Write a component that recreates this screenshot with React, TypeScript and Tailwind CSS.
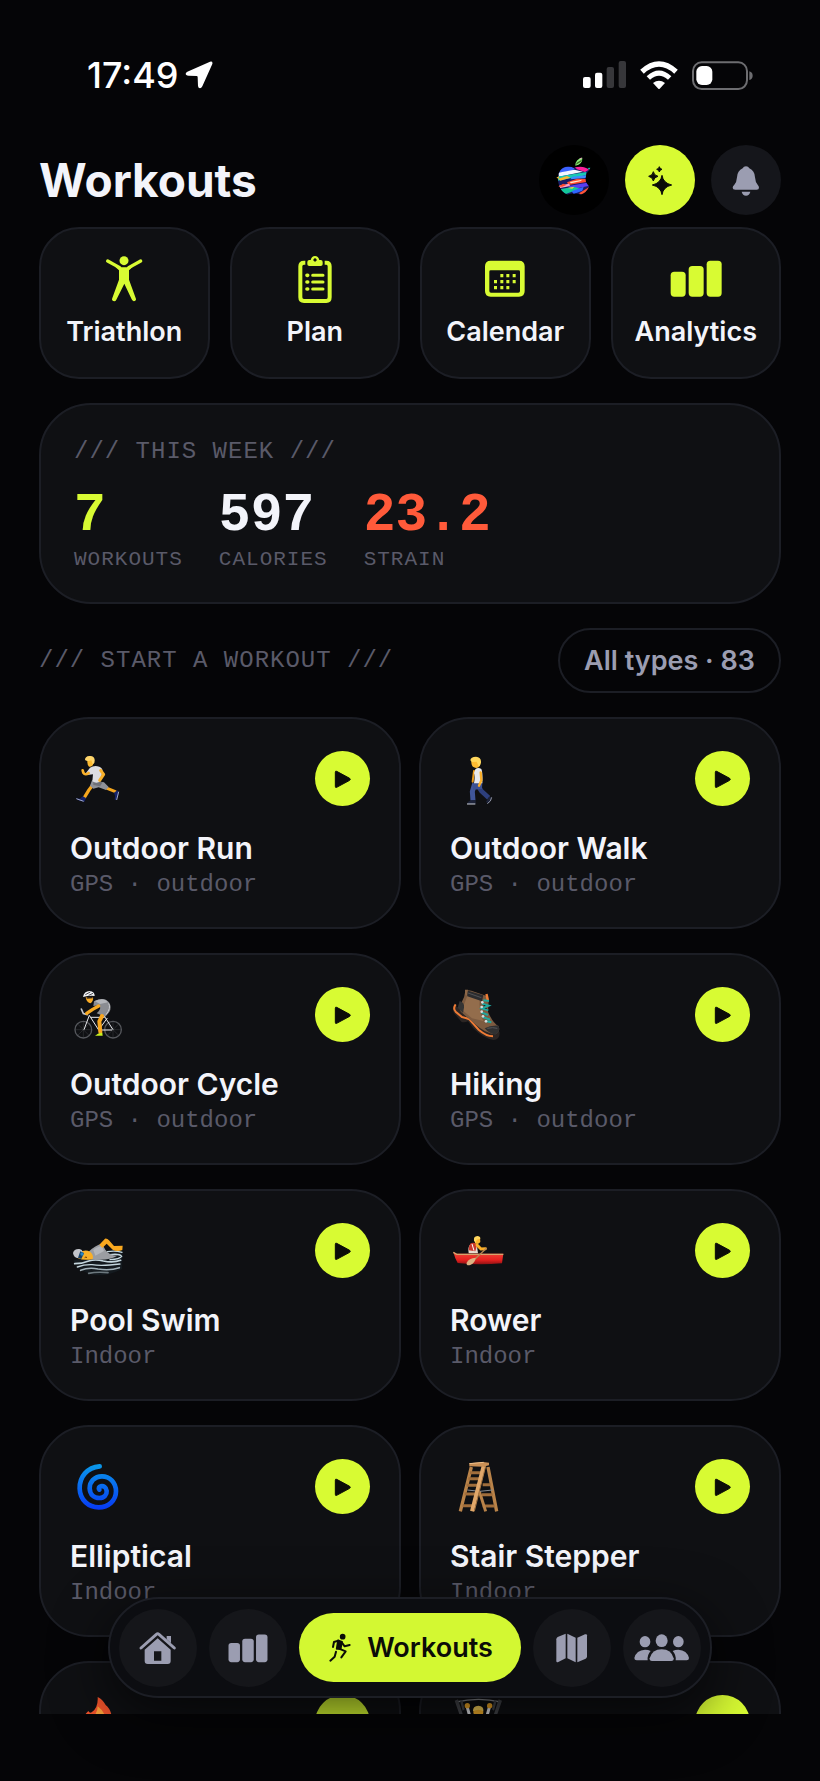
import type { ReactNode } from "react";

const LIME = "#d8fb33";
const GREY = "#9b9db1";

/* ---------- status bar ---------- */

function StatusBar() {
  return (
    <div className="flex h-[44px] items-center justify-between pr-[67px] pl-[87px] text-white">
      <div className="flex items-center gap-[6px]">
        <span className="text-[36px] leading-[44px] font-medium">17:49</span>
        <svg className="size-7" viewBox="555 95 84 84" aria-hidden="true">
          <path
            d="M630 97 L562 127 Q554 132 559 137 Q561 139 566 139 L590 140 Q593 140 593 144 L594 170 Q595 177 600 177 Q604 177 607 171 L637 104 Q639 95 630 97Z"
            fill="#fff"
          />
        </svg>
      </div>
      <div className="flex items-center gap-[14px]">
        <svg className="h-7 w-[43px]" viewBox="516 93 129 84" aria-hidden="true">
          <rect x="516" y="141" width="23" height="33" rx="6" fill="#fff" />
          <rect x="552" y="128" width="22" height="46" rx="6" fill="#fff" />
          <rect x="587" y="111" width="22" height="63" rx="6" fill="#37373a" />
          <rect x="623" y="93" width="22" height="81" rx="6" fill="#37373a" />
        </svg>
        <svg className="h-[29px] w-[38px]" viewBox="688 90 114 87" aria-hidden="true">
          <path d="M694 122 Q745 76 796 122" fill="none" stroke="#fff" strokeWidth="16" />
          <path d="M713 141 Q745 112 777 141" fill="none" stroke="#fff" strokeWidth="15" />
          <path d="M727 156 Q745 142 763 156 L747 173 Q745 175 743 173Z" fill="#fff" />
        </svg>
        <svg className="h-[29px] w-[61px]" viewBox="845 90 183 87" aria-hidden="true">
          <rect x="848" y="94" width="162" height="80" rx="26" fill="none" stroke="#6d6d70" strokeWidth="6" />
          <rect x="858" y="105" width="48" height="57" rx="17" fill="#fff" />
          <path d="M1017 121 Q1027 124 1027 134 Q1027 144 1017 147Z" fill="#6d6d70" />
        </svg>
      </div>
    </div>
  );
}

/* ---------- header ---------- */

function AvatarArt() {
  return (
    <svg className="size-[70px]" viewBox="386 343 210 210" aria-hidden="true">
      <defs>
        <clipPath id="fruit">
          <path d="M490 411 Q465 402 451 417 Q438 434 445 460 Q453 488 472 492 Q482 488 491 489 Q500 488 510 492 Q528 488 537 466 Q524 458 526 442 Q527 426 538 419 Q520 402 490 411Z" />
        </clipPath>
      </defs>
      <path d="M495 405 Q495 385 516 381 Q517 401 495 405Z" fill="#8cf27a" />
      <path d="M499 396 L516 386 L512 393 L497 402Z" fill="#3b6b22" />
      <path d="M505 386 L514 380 L513 384Z" fill="#ff9bd0" />
      <g clipPath="url(#fruit)">
        <rect x="436" y="400" width="110" height="96" fill="#1a1c66" />
        <path d="M448 420 Q470 400 492 412 L488 420 L446 426Z" fill="#3b62ff" />
        <path d="M492 408 Q520 400 541 414 L524 424 L500 416Z" fill="#ff1f9a" />
        <path d="M444 426 L492 417 L518 423 L446 438Z" fill="#f4f6ff" />
        <path d="M440 438 L528 424 L527 434 L442 450Z" fill="#19c9b4" />
        <path d="M444 444 L470 436 L480 441 L450 450Z" fill="#ffb52b" />
        <path d="M486 438 L528 434 L526 442 L480 446Z" fill="#3e8bff" />
        <path d="M470 455 L500 444 L530 445 L528 454 L474 463Z" fill="#ff4a2e" />
        <path d="M478 454 L516 447 L510 452 L482 458Z" fill="#ffe6c7" />
        <path d="M444 465 L476 459 L480 466 L446 473Z" fill="#ff9fc4" />
        <path d="M474 466 L530 456 L534 466 L486 476Z" fill="#5a3df0" />
        <path d="M448 476 L490 468 L510 474 L466 490Z" fill="#13c79a" />
        <path d="M484 482 L520 468 L516 480 L490 490Z" fill="#2f66ff" />
        <path d="M506 488 L538 468 L538 482 L516 494Z" fill="#ff5436" />
        <path d="M472 472 L492 468 L486 474Z" fill="#ffd23c" />
      </g>
      <path d="M438 441 L446 437 L445 444Z" fill="#ffb52b" />
      <path d="M444 468 L458 459 L468 463 L456 468Z" fill="#ff4a2e" />
      <path d="M532 412 L540 411 L537 417Z" fill="#19c9b4" />
    </svg>
  );
}

function star(cx: number, cy: number, r: number) {
  const k = r * 0.2;
  return `M${cx} ${cy - r} Q${cx + k * 0.6} ${cy - k} ${cx + r} ${cy} Q${cx + k * 0.6} ${cy + k} ${cx} ${cy + r} Q${cx - k * 0.6} ${cy + k} ${cx - r} ${cy} Q${cx - k * 0.6} ${cy - k} ${cx} ${cy - r}Z`;
}

function Header() {
  return (
    <header className="mt-[48px] flex items-center justify-between px-[39px]">
      <h1 className="text-[46px] leading-[60px] font-bold text-[#f3f4fa]">Workouts</h1>
      <div className="flex gap-4">
        <button type="button" aria-label="Profile" className="size-[70px] rounded-full bg-black">
          <AvatarArt />
        </button>
        <button
          type="button"
          aria-label="Assistant"
          className="flex size-[70px] items-center justify-center rounded-full bg-[#d8fb33]"
        >
          <svg className="size-[30px] overflow-visible" viewBox="705 403 90 90" aria-hidden="true">
            <g fill="#0b0c08" stroke="#0b0c08" strokeWidth="3" strokeLinejoin="round">
              <path d={star(756, 463, 29)} />
              <path d={star(730, 437, 14)} />
              <path d={star(748, 416, 8)} />
            </g>
          </svg>
        </button>
        <button
          type="button"
          aria-label="Notifications"
          className="flex size-[70px] items-center justify-center rounded-full bg-[#15161b]"
        >
          <svg className="size-[34px]" viewBox="957 397 102 102" aria-hidden="true">
            <path
              d="M1008 407 Q1015 407 1018 413 Q1034 420 1035 440 Q1036 455 1043 462 Q1047 467 1047 471 Q1047 477 1040 477 H976 Q968 477 968 471 Q968 467 973 462 Q980 455 981 440 Q982 420 998 413 Q1001 407 1008 407Z"
              fill={GREY}
            />
            <path d="M995 483 H1021 Q1018 495 1008 495 Q998 495 995 483Z" fill={GREY} />
          </svg>
        </button>
      </div>
    </header>
  );
}

/* ---------- quick links ---------- */

function Bars({ color }: { color: string }) {
  return (
    <g fill={color}>
      <rect x="0" y="33" width="45" height="75" rx="11" />
      <rect x="54" y="16" width="45" height="92" rx="11" />
      <rect x="108" y="0" width="45" height="108" rx="11" />
    </g>
  );
}

const quickLinks: { label: string; icon: ReactNode }[] = [
  {
    label: "Triathlon",
    icon: (
      <svg className="h-12 w-[52px]" viewBox="205 118 156 144" aria-hidden="true">
        <circle cx="283" cy="135" r="13.5" fill={LIME} />
        <path d="M234 136 L270 156 M333 136 L297 156" stroke={LIME} strokeWidth="10" strokeLinecap="round" />
        <path
          d="M262 148 L270 155 H297 L305 148 L308 155 L298 164 V192 L318 247 Q321 254 315 256 Q309 258 306 251 L284 204 L260 252 Q257 258 251 256 Q245 254 248 247 L268 192 V164 L258 155Z"
          fill={LIME}
        />
      </svg>
    ),
  },
  {
    label: "Plan",
    icon: (
      <svg className="h-12 w-[52px]" viewBox="776 120 156 144" aria-hidden="true">
        <path
          d="M825 143 H821 Q810 143 810 154 V247 Q810 258 821 258 H888 Q898 258 898 247 V154 Q898 143 888 143 H883"
          fill="none"
          stroke={LIME}
          strokeWidth="12"
        />
        <path
          fillRule="evenodd"
          d="M831 141 Q831 135 837 135 H841 Q844 123 854 123 Q864 123 867 135 H871 Q877 135 877 141 V148 Q877 153 871 153 H837 Q831 153 831 148Z M854 130 a5 5 0 1 0 0.1 0Z"
          fill={LIME}
        />
        <g stroke={LIME} strokeWidth="9" strokeLinecap="round">
          <path d="M847 181 H878 M847 201 H878 M847 222 H878" />
          <path d="M830 181 h2 M830 201 h2 M830 222 h2" strokeWidth="11" />
        </g>
      </svg>
    ),
  },
  {
    label: "Calendar",
    icon: (
      <svg className="h-12 w-[52px]" viewBox="208 118 156 144" aria-hidden="true">
        <path
          fillRule="evenodd"
          d="M243 135 H328 Q345 135 345 152 V226 Q345 243 328 243 H243 Q226 243 226 226 V152 Q226 135 243 135Z M243 164 Q239 164 239 168 V226 Q239 231 244 231 H326 Q331 231 331 226 V168 Q331 164 327 164Z"
          fill={LIME}
        />
        <path
          d="M272 180 h9 M290 180 h9 M309 180 h9 M253 198 h9 M272 198 h9 M290 198 h9 M309 198 h9 M253 216 h9 M272 216 h9 M290 216 h9"
          stroke={LIME}
          strokeWidth="10"
        />
      </svg>
    ),
  },
  {
    label: "Analytics",
    icon: (
      <svg className="h-12 w-[52px]" viewBox="-2 -17 156 144" aria-hidden="true">
        <Bars color={LIME} />
      </svg>
    ),
  },
];

function QuickLinks() {
  return (
    <nav aria-label="Shortcuts" className="grid grid-cols-4 gap-5">
      {quickLinks.map((q) => (
        <a
          key={q.label}
          href={`#${q.label.toLowerCase()}`}
          className="flex flex-col items-center gap-[13px] rounded-[40px] border-2 border-[#1c1e25] bg-[#0f1013] pt-[26px] pb-[29px]"
        >
          {q.icon}
          <span className="text-[27px] leading-8 font-semibold text-[#f3f4fa]">{q.label}</span>
        </a>
      ))}
    </nav>
  );
}

/* ---------- week summary ---------- */

const stats = [
  { value: "7", label: "WORKOUTS", tone: "text-[#d8fb33]" },
  { value: "597", label: "CALORIES", tone: "text-[#f3f4fa]" },
  { value: "23.2", label: "STRAIN", tone: "text-[#ff5a3a]" },
];

function WeekSummary() {
  return (
    <section className="rounded-[52px] border-2 border-[#1c1e25] bg-[#0f1013] px-[33px] pt-[33px] pb-[30px] font-['Liberation_Mono',monospace]">
      <h2 className="text-[24px] leading-7 tracking-[1px] text-[#5a5a69]">/// THIS WEEK ///</h2>
      <dl className="mt-[22px] flex gap-9">
        {stats.map((s) => (
          <div key={s.label} className="flex flex-col-reverse gap-[4px]">
            <dt className="text-[21px] leading-6 tracking-[1px] text-[#5a5a69]">{s.label}</dt>
            <dd className={`h-14 w-0 text-[53px] leading-[56px] font-bold whitespace-nowrap ${s.tone}`}>{s.value}</dd>
          </div>
        ))}
      </dl>
    </section>
  );
}

/* ---------- workout illustrations ---------- */

const art: Record<string, ReactNode> = {
  run: (
    <svg className="size-[55px] overflow-visible" viewBox="120 150 165 165" aria-hidden="true">
      <path d="M206 245 L232 262 L256 272" stroke="#f5a61d" strokeWidth="9" fill="none" strokeLinecap="round" />
      <path d="M190 250 L176 268 L164 288" stroke="#f5a61d" strokeWidth="10" fill="none" strokeLinecap="round" />
      <path d="M186 238 L222 244 L236 258 L228 267 L206 259 L190 263 L180 254Z" fill="#8f9198" />
      <path d="M190 240 L218 244 L210 256 L190 252Z" fill="#6f7178" />
      <path d="M180 200 Q192 192 208 197 Q220 203 217 212 L212 240 Q200 250 187 241 L189 220 L172 222 L168 216Z" fill="#dcdde2" />
      <path d="M176 216 Q166 224 160 215 L158 208" stroke="#f9b12b" strokeWidth="8" fill="none" strokeLinecap="round" />
      <path d="M212 208 L221 220 L209 238" stroke="#f9b12b" strokeWidth="9" fill="none" strokeLinecap="round" strokeLinejoin="round" />
      <path d="M172 176 Q182 168 191 176 L189 192 Q184 199 177 197 Q171 192 172 176Z" fill="#fbb930" />
      <path d="M165 177 Q165 166 178 165 Q192 163 194 176 Q195 188 188 190 L184 178 Q172 182 165 177Z" fill="#ffd66b" />
      <path d="M137 292 L150 293 L158 286 L168 291 L163 302 Q148 302 137 292Z" fill="#14226a" />
      <path d="M139 293 L161 301" stroke="#e8ebf8" strokeWidth="2" />
      <path d="M252 275 L262 268 L267 275 L260 297 L254 296 Q258 286 252 275Z" fill="#14226a" />
      <path d="M266 272 L260 297" stroke="#e8ebf8" strokeWidth="2" />
    </svg>
  ),
  walk: (
    <svg className="size-[55px] overflow-visible" viewBox="146 58 165 165" aria-hidden="true">
      <path d="M218 118 L214 150" stroke="#e99a1b" strokeWidth="6" strokeLinecap="round" />
      <path d="M228 158 L240 178 L262 198" stroke="#2d3f7c" strokeWidth="14" fill="none" strokeLinejoin="round" />
      <path d="M220 156 L213 180 L215 206" stroke="#40569a" strokeWidth="15" fill="none" strokeLinejoin="round" />
      <path d="M217 152 H243 L242 172 L215 174Z" fill="#3b5092" />
      <path d="M222 113 Q230 106 240 112 Q245 122 243 155 H218 Q222 132 218 124Z" fill="#e8e9ee" />
      <path d="M238 122 L240 146 L233 162" stroke="#fbb02b" strokeWidth="7" fill="none" strokeLinecap="round" />
      <path d="M210 86 L234 82 L236 102 Q228 112 218 107 Q209 104 210 86Z" fill="#fdbb31" />
      <path d="M207 86 Q208 75 224 75 Q240 76 239 92 Q238 103 232 104 L226 90 L212 91Z" fill="#ffd75c" />
      <path d="M198 217 Q199 208 212 206 H223 V217Z" fill="#1c2238" />
      <path d="M197 217 H222" stroke="#cfd2dc" strokeWidth="3" />
      <path d="M254 210 L263 195 L271 197 Q271 209 260 216Z" fill="#1c2238" />
      <path d="M271 197 Q270 209 258 216" stroke="#cfd2dc" strokeWidth="2" fill="none" />
    </svg>
  ),
  cycle: (
    <svg className="size-[55px] overflow-visible" viewBox="120 857 165 165" aria-hidden="true">
      {[160, 249].map((cx) => (
        <g key={cx} stroke="#55575c" fill="none">
          <circle cx={cx} cy="985" r="25" strokeWidth="4" />
          <path d={`M${cx - 24} 985 h48 M${cx} 961 v48 M${cx - 17} 968 l34 34 M${cx + 17} 968 l-34 34`} strokeWidth="1" />
        </g>
      ))}
      <path d="M162 985 L178 942 L206 986 L232 950 M182 948 H224 M222 943 L249 985 M206 986 H246" stroke="#e9eaee" strokeWidth="3" fill="none" />
      <path d="M154 923 L160 937 L172 940" stroke="#c5c7cc" strokeWidth="5" fill="none" strokeLinecap="round" />
      <path d="M192 900 Q222 884 237 903 Q246 918 238 932 L226 946 L200 936 Q218 920 206 912 L190 914Z" fill="#8b8d92" />
      <path d="M194 899 Q222 887 234 903 L210 908Z" fill="#b4b6ba" />
      <path d="M236 906 Q244 920 228 940" fill="none" stroke="#c9cacd" strokeWidth="3" />
      <path d="M206 914 L188 924 L170 936" stroke="#f7a922" strokeWidth="10" fill="none" strokeLinecap="round" strokeLinejoin="round" />
      <path d="M216 944 L208 960 L211 992" stroke="#f9a71f" strokeWidth="12" fill="none" strokeLinecap="round" strokeLinejoin="round" />
      <path d="M195 1003 Q204 994 217 994 L218 1003Z" fill="#c9f11f" />
      <path d="M167 888 L189 887 Q191 899 182 906 Q170 905 167 888Z" fill="#f9ab25" />
      <path d="M170 890 L188 888" stroke="#30241a" strokeWidth="5" />
      <path d="M159 887 Q162 869 179 869 Q194 871 194 884 Q178 882 159 887Z" fill="#f2f3f5" />
      <path d="M166 880 L181 872 M176 882 L189 876" stroke="#4b4d52" strokeWidth="3" />
    </svg>
  ),
  boot: (
    <svg className="size-[55px] overflow-visible" viewBox="116 138 165 165" aria-hidden="true">
      <path d="M130 192 Q121 204 128 216 L150 242 Q158 246 170 241 L186 262 Q216 292 246 297 Q266 296 265 274 L220 262 L160 216Z" fill="#2b2523" />
      <path d="M133 190 Q124 202 133 212 L152 228 Q164 231 174 235 L202 266 Q224 285 245 286" fill="none" stroke="#ee7b35" strokeWidth="6" />
      <path d="M162 150 Q168 146 180 149 L224 164 L232 180 L230 212 Q244 246 262 256 Q268 272 252 280 Q222 278 192 250 L150 214 Q142 206 150 186 Q160 170 162 150Z" fill="#7d5b40" />
      <path d="M170 160 L206 172 Q200 206 216 240 L182 232 L152 206Z" fill="#936d4c" />
      <path d="M145 180 Q160 184 158 200 L155 216 L139 200Z" fill="#343434" />
      <path d="M166 148 L216 163 L212 181 L168 166Z" fill="#2c2c2e" />
      <path d="M170 156 L210 170" stroke="#505154" strokeWidth="3" />
      <path d="M161 146 L170 146 L167 164 L161 160Z" fill="#8d6747" />
      <path d="M222 160 L229 158 L233 176 L226 180Z" fill="#ef7c34" />
      <path d="M216 178 L233 180 M212 188 L232 194 L212 202 L231 208 M210 214 L230 222 M214 228 L236 236 M222 240 L240 244" stroke="#1fa79f" strokeWidth="6" />
      <g fill="#d8dde0">
        <circle cx="213" cy="184" r="4" />
        <circle cx="211" cy="198" r="4" />
        <circle cx="211" cy="212" r="4" />
        <circle cx="215" cy="226" r="4" />
        <circle cx="224" cy="241" r="4" />
      </g>
      <path d="M220 262 Q238 252 262 254 Q268 272 252 281 Q234 278 220 262Z" fill="#303030" />
      <path d="M228 262 Q244 258 258 262" stroke="#55565a" strokeWidth="3" fill="none" />
    </svg>
  ),
  swim: (
    <svg className="size-[55px] overflow-visible" viewBox="120 124 165 165" aria-hidden="true">
      <path d="M130 236 Q160 228 200 232 Q250 206 278 206 L276 262 Q240 282 200 281 Q148 274 130 236Z" fill="#141a1f" />
      <g fill="none" stroke="#c4d6de" strokeLinecap="round">
        <path d="M134 246 Q158 246 176 238 Q196 232 220 238 Q250 244 272 236" strokeWidth="5" />
        <path d="M142 256 Q164 248 186 249 Q214 254 270 247" strokeWidth="4" />
        <path d="M152 266 Q176 256 204 262 Q240 268 268 258" strokeWidth="5" opacity=".8" />
        <path d="M176 275 Q200 270 234 273" strokeWidth="5" opacity=".5" />
        <path d="M232 210 Q256 206 276 212 M240 219 Q268 215 275 224 Q270 232 240 234" strokeWidth="4" />
      </g>
      <path d="M176 210 Q196 190 216 186 L226 204 Q236 220 262 222 Q240 236 200 234 L176 232Z" fill="#9b9da2" />
      <path d="M190 205 Q206 192 216 194 L222 208 L196 222Z" fill="#b4b6bb" />
      <path d="M208 189 L225 171 Q232 170 237 176 L252 193 L278 192 L277 205 Q262 212 248 204 L230 186 L217 199Z" fill="#f9a81f" />
      <path d="M148 212 Q166 202 180 210 Q192 220 188 232 Q164 238 144 230Z" fill="#fab027" />
      <path d="M129 214 Q132 201 148 202 Q158 204 157 211 L145 230 Q131 228 129 214Z" fill="#c3c5cb" />
      <path d="M151 209 L162 214 L154 232 L144 228Z" fill="#173f66" />
      <circle cx="156" cy="217" r="5" fill="#2a86c4" />
      <path d="M164 228 Q168 224 171 228" stroke="#713400" strokeWidth="3" fill="none" />
    </svg>
  ),
  row: (
    <svg className="size-[55px] overflow-visible" viewBox="116 845 165 165" aria-hidden="true">
      <defs>
        <linearGradient id="hull" x1="0" x2="0" y1="0" y2="1">
          <stop offset="0" stopColor="#f04a39" />
          <stop offset=".65" stopColor="#e5201f" />
          <stop offset="1" stopColor="#8f1214" />
        </linearGradient>
      </defs>
      <path d="M172 936 Q168 918 178 908 L196 908 L200 936Z" fill="#e9dcd0" />
      <path d="M178 906 Q188 902 198 909 L192 930 L172 927 Q171 914 178 906Z" fill="#c9382b" />
      <path d="M182 908 L188 928" stroke="#fff" strokeWidth="3" />
      <path d="M197 911 L209 923 L222 922" stroke="#f9ae28" strokeWidth="9" strokeLinecap="round" fill="none" />
      <path d="M190 889 L206 888 L207 902 Q200 912 191 906Z" fill="#fbb42c" />
      <path d="M188 898 Q186 885 198 884 Q207 884 207 892 L196 895 L193 905Z" fill="#ffd75e" />
      <path d="M126 932 L136 937 H276 L272 966 Q200 972 139 965 Q131 952 126 932Z" fill="url(#hull)" />
      <path d="M126 933 L136 939 H276" stroke="#d6a46d" strokeWidth="4" fill="none" />
      <path d="M226 920 L188 956" stroke="#b78654" strokeWidth="4" />
      <path d="M193 949 Q192 964 177 971 Q164 974 166 964 Q172 951 193 949Z" fill="#dcb283" />
    </svg>
  ),
  swirl: (
    <svg className="size-[55px] overflow-visible" viewBox="120 831 165 165" aria-hidden="true">
      <defs>
        <linearGradient id="cyclone" gradientUnits="userSpaceOnUse" x1="0" x2="0" y1="845" y2="985">
          <stop offset="0" stopColor="#0a9be9" />
          <stop offset="1" stopColor="#0738f4" />
        </linearGradient>
      </defs>
      <path
        d="M209 853 C172 856 148 884 149 920 C150 954 176 976 206 976 C236 976 258 955 258 928 C258 900 238 883 216 883 C193 883 179 900 179 919 C180 938 192 948 208 948 C223 948 231 938 230 927 C229 915 220 911 212 913 C207 914 205 918 208 923"
        fill="none"
        stroke="url(#cyclone)"
        strokeWidth="14"
        strokeLinecap="round"
      />
    </svg>
  ),
  ladder: (
    <svg className="size-[55px] overflow-visible" viewBox="116 171 165 165" aria-hidden="true">
      <g stroke="#b98349" strokeWidth="9">
        <path d="M180 195 L147 328 M230 195 L256 328" strokeWidth="10" />
        <path d="M176 212 H210 M171 230 H206 M166 250 H200 M160 276 H192 M154 311 H188" stroke="#a06d3b" />
        <path d="M214 248 H238 M212 278 H244 M214 312 H250" stroke="#a06d3b" />
        <path d="M204 268 L223 328" strokeWidth="9" />
      </g>
      <path d="M168 264 Q205 272 244 264" stroke="#868b90" strokeWidth="3" fill="none" />
      <path d="M217 192 L182 328" stroke="#e0a76a" strokeWidth="12" />
      <path d="M223 192 L189 328" stroke="#a87642" strokeWidth="3" />
      <path d="M174 184 L216 180 L233 182 V190 L215 194 L174 193Z" fill="#c98f55" />
      <path d="M174 185 L217 181" stroke="#efc08a" strokeWidth="3" />
    </svg>
  ),
  fire: (
    <svg className="size-[55px] overflow-visible" viewBox="-61 340 165 165" aria-hidden="true">
      <path d="M22 346 Q36 352 46 370 Q64 384 65 414 Q64 486 20 492 Q-26 486 -28 436 Q-24 404 -6 388 Q-2 396 4 392 Q24 378 22 346Z" fill="#f0532b" />
      <path d="M22 374 Q36 384 44 402 Q58 440 36 468 Q18 488 0 466 Q-12 440 6 406 Q22 396 22 374Z" fill="#f9a33b" />
    </svg>
  ),
  lift: (
    <svg className="size-[55px] overflow-visible" viewBox="116 879 165 165" aria-hidden="true">
      <path d="M134 900 Q202 884 268 900" stroke="#8b8d92" strokeWidth="4" fill="none" />
      <path d="M130 896 L140 892 L154 936 L146 942Z M146 896 L153 894 L160 922 L154 926Z M272 896 L262 892 L248 936 L256 942Z M256 896 L249 894 L242 922 L248 926Z" fill="#45474c" />
      <path d="M168 916 L174 938 L190 956 M234 916 L228 938 L212 956" stroke="#e8e9ed" strokeWidth="9" fill="none" />
      <circle cx="168" cy="911" r="8" fill="#f9ae28" />
      <circle cx="235" cy="911" r="8" fill="#f9ae28" />
      <circle cx="201" cy="930" r="15" fill="#fbb42c" />
      <path d="M185 928 Q184 912 201 911 Q218 912 216 928 Q202 918 185 928Z" fill="#ffd75e" />
      <path d="M184 950 H218 V990 H184Z" fill="#a5a7ac" />
    </svg>
  ),
};

/* ---------- workout grid ---------- */

const workouts = [
  { name: "Outdoor Run", meta: "GPS · outdoor", art: "run" },
  { name: "Outdoor Walk", meta: "GPS · outdoor", art: "walk" },
  { name: "Outdoor Cycle", meta: "GPS · outdoor", art: "cycle" },
  { name: "Hiking", meta: "GPS · outdoor", art: "boot" },
  { name: "Pool Swim", meta: "Indoor", art: "swim" },
  { name: "Rower", meta: "Indoor", art: "row" },
  { name: "Elliptical", meta: "Indoor", art: "swirl" },
  { name: "Stair Stepper", meta: "Indoor", art: "ladder" },
  { name: "", meta: "", art: "fire" },
  { name: "", meta: "", art: "lift" },
];

function WorkoutCard({ name, meta, picture }: { name: string; meta: string; picture: ReactNode }) {
  return (
    <article className="min-h-[212px] rounded-[50px] border-2 border-[#1c1e25] bg-[#0f1013] px-[29px] pt-8 pb-[26px]">
      <div className="flex items-center justify-between">
        {picture}
        <button
          type="button"
          aria-label="Start"
          className="flex size-[55px] items-center justify-center rounded-full bg-[#d8fb33]"
        >
          <svg className="size-[18px]" viewBox="0 0 54 54" aria-hidden="true">
            <path d="M8 4 L47 25 Q51 28 47 31 L8 52 Q4 54 4 49 V7 Q4 2 8 4Z" fill="#0b0c08" stroke="#0b0c08" strokeWidth="3" strokeLinejoin="round" />
          </svg>
        </button>
      </div>
      <h3 className="mt-6 text-[30px] leading-9 font-semibold text-[#f3f4fa]">{name}</h3>
      <p className="mt-[5px] font-['Liberation_Mono',monospace] text-[24px] leading-7 text-[#5a5a69]">{meta}</p>
    </article>
  );
}

/* ---------- bottom navigation ---------- */

const tab = "flex size-[78px] items-center justify-center rounded-full bg-[#15161a]";

function TabBar() {
  return (
    <div className="absolute inset-x-0 bottom-[83px] flex justify-center">
      <nav
        aria-label="Main"
        className="flex h-[101px] items-center gap-3 rounded-full border-2 border-[#1c1e25] bg-[#0c0d11] px-[9px] shadow-[0_16px_56px_rgba(0,0,0,0.65)]"
      >
        <a href="#home" aria-label="Home" className={tab}>
          <svg className="size-10" viewBox="142 144 120 120" aria-hidden="true">
            <path d="M151 204 L197 163 Q201 160 205 163 L251 204" fill="none" stroke={GREY} strokeWidth="9" strokeLinecap="round" />
            <path d="M228 168 H241 V190 L228 178Z" fill={GREY} />
            <path
              fillRule="evenodd"
              d="M201 175 L240 209 V243 Q240 252 231 252 H171 Q162 252 162 243 V209Z M190 214 V242 H212 V214Z"
              fill={GREY}
            />
          </svg>
        </a>
        <a href="#stats" aria-label="Stats" className={tab}>
          <svg className="size-10 overflow-visible" viewBox="-2 -26 157 157" aria-hidden="true">
            <Bars color={GREY} />
          </svg>
        </a>
        <a
          href="#workouts"
          aria-current="page"
          className="flex h-[69px] items-center gap-[14px] rounded-full bg-[#d3f832] px-7 text-[#0b0c08]"
        >
          <svg className="h-[30px] w-[26px]" viewBox="704 160 78 90" aria-hidden="true">
            <circle cx="751" cy="171" r="8.5" fill="#0b0c08" />
            <path
              d="M738 183 L725 187 L722 202 M748 188 L757 200 L772 196 M740 207 L760 215 L747 233 M731 216 L727 231 L714 243"
              fill="none"
              stroke="#0b0c08"
              strokeWidth="6"
              strokeLinecap="round"
              strokeLinejoin="round"
            />
            <path d="M737 182 L749 186 L745 208 L733 208Z" fill="#0b0c08" stroke="#0b0c08" strokeWidth="5" strokeLinejoin="round" />
          </svg>
          <span className="text-[27px] leading-9 font-semibold">Workouts</span>
        </a>
        <a href="#map" aria-label="Map" className={tab}>
          <svg className="size-10" viewBox="430 684 120 120" aria-hidden="true">
            <g fill={GREY}>
              <path d="M443 718 Q443 713 447 711 L471 701 V775 L449 786 Q443 788 443 783Z" />
              <path d="M476 701 L501 713 V787 L476 775Z" />
              <path d="M506 713 L529 703 Q535 701 535 706 V769 Q535 774 531 776 L506 787Z" />
            </g>
          </svg>
        </a>
        <a href="#community" aria-label="Community" className={tab}>
          <svg className="size-[58px]" viewBox="673 657 174 174" aria-hidden="true">
            <g fill={GREY}>
              <ellipse cx="759" cy="722" rx="18" ry="19" />
              <ellipse cx="709" cy="725" rx="16" ry="17" />
              <ellipse cx="809" cy="725" rx="16" ry="17" />
              <path d="M730 783 Q722 783 723 775 Q730 748 759 748 Q788 748 795 775 Q796 783 788 783Z" />
              <path d="M726 753 Q719 749 709 749 Q683 750 677 774 Q677 781 684 781 H717 Q715 765 726 753Z" />
              <path d="M792 753 Q799 749 809 749 Q835 750 841 774 Q841 781 834 781 H801 Q803 765 792 753Z" />
            </g>
          </svg>
        </a>
      </nav>
    </div>
  );
}

export default function App() {
  return (
    <div className="relative flex h-screen flex-col bg-[#050507] pt-[53px] pb-[67px] font-['Inter','Liberation_Sans',sans-serif]">
      <StatusBar />
      <Header />
      <main className="mt-3 flex min-h-0 flex-1 flex-col gap-6 overflow-y-auto px-[39px] [scrollbar-width:none] *:shrink-0">
        <QuickLinks />
        <WeekSummary />
        <div className="flex items-center justify-between">
          <h2 className="font-['Liberation_Mono',monospace] text-[24px] leading-7 tracking-[1px] text-[#5a5a69]">
            /// START A WORKOUT ///
          </h2>
          <button
            type="button"
            className="h-[65px] rounded-full border-2 border-[#1c1e25] px-6 text-[27px] leading-8 font-semibold text-[#9b9db1]"
          >
            All types · 83
          </button>
        </div>
        <section className="grid grid-cols-2 gap-x-[18px] gap-y-6">
          {workouts.map((w) => (
            <WorkoutCard key={w.art} name={w.name} meta={w.meta} picture={art[w.art]} />
          ))}
        </section>
      </main>
      <TabBar />
    </div>
  );
}
